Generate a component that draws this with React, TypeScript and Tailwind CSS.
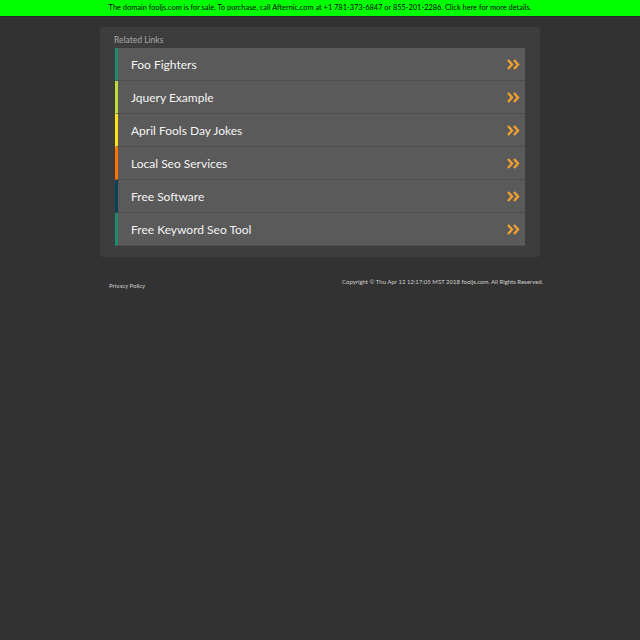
import React from "react";

const links = [
  { t: "Foo Fighters", c: "#1f8a70" },
  { t: "Jquery Example", c: "#bedb39" },
  { t: "April Fools Day Jokes", c: "#ffe11a" },
  { t: "Local Seo Services", c: "#fd7400" },
  { t: "Free Software", c: "#004358" },
  { t: "Free Keyword Seo Tool", c: "#1f8a70" },
];

function Chevrons() {
  return (
    <svg width="13" height="11" viewBox="0 0 13 11">
      <path d="M1 1 L5 5.5 L1 10" stroke="#f0a030" strokeWidth="2.4" fill="none" />
      <path d="M7 1 L11 5.5 L7 10" stroke="#f0a030" strokeWidth="2.4" fill="none" />
    </svg>
  );
}

export default function App() {
  return (
    <div className="min-h-[640px] w-[640px] bg-[#323232]" style={{ fontFamily: "Lato, 'Open Sans', sans-serif" }}>
      <div className="h-[16px] bg-[#00ff00] text-black text-[7.4px] flex items-center justify-center leading-none">
        The domain fooljs.com is for sale. To purchase, call Afternic.com at +1 781-373-6847 or 855-201-2286. Click here for more details.
      </div>
      <div className="h-[1px] bg-[#2a2a2a]" />
      <div className="mt-[10px] ml-[100px] w-[440px] h-[230px] bg-[#3d3d3d] rounded-[3px] pt-[9px] px-[15px]">
        <div className="text-[8.5px] text-[#a8a8a8] leading-none h-[12px] -ml-[1px]">Related Links</div>
        <div className="flex flex-col">
          {links.map((l, i) => (
            <div
              key={i}
              className="h-[33px] flex items-center bg-[#5a5a5a] border-b border-[#4e4e4e] border-l-[3px]"
              style={{ borderLeftColor: l.c }}
            >
              <span className="ml-[13px] mt-[1px] text-[12px] text-[#f4f4f4] flex-1">{l.t}</span>
              <span className="mr-[5px] flex"><Chevrons /></span>
            </div>
          ))}
        </div>
      </div>
      <div className="ml-[109px] w-[434px] flex justify-between mt-[20px]">
        <span className="text-[6px] text-[#cfcfcf] mt-[4px]">Privacy Policy</span>
        <span className="text-[6px] text-[#cfcfcf]">Copyright © Thu Apr 12 12:17:05 MST 2018 fooljs.com. All Rights Reserved.</span>
      </div>
    </div>
  );
}
